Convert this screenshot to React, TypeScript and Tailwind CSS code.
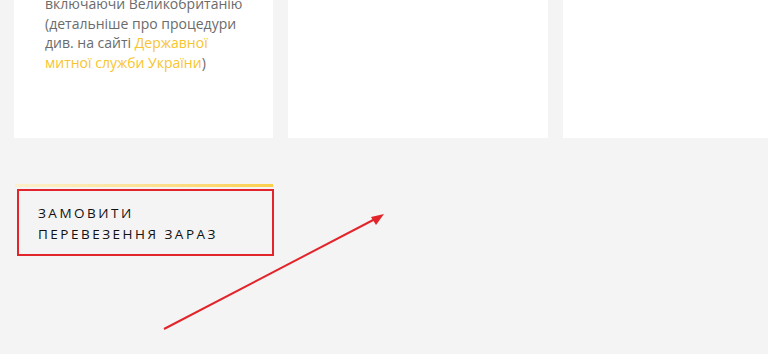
export default function App() {
  return (
    <div className="relative w-[768px] h-[354px] overflow-hidden bg-[#f4f4f4]" style={{ fontFamily: '"Open Sans", "Noto Sans", sans-serif' }}>
      <div className="flex gap-[15px] pl-[14px] h-[138px]">
        <div className="w-[259px] shrink-0 bg-white pl-[31px] pr-[20px]">
          <p className="-mt-[6px] text-[14px] leading-[19.7px] text-[#6b6b6b]">
            включаючи Великобританію (детальніше про процедури див. на сайті{" "}
            <a className="text-[#f7c52e]">Державної митної служби України</a>)
          </p>
        </div>
        <div className="w-[260px] shrink-0 bg-white" />
        <div className="w-[260px] shrink-0 bg-white" />
      </div>
      <div className="pl-[15px] pt-[46px]">
        <div className="w-[258px] h-[3px] bg-gradient-to-r from-[#fdf1cc] to-[#fccf4a]" />
        <div className="ml-[2px] mt-[2px] w-[257px] h-[67px] border-2 border-[#e2252b] pl-[19px] pt-[12px]">
          <div className="text-[13.5px] leading-[21px] tracking-[2.5px] text-[#111] uppercase">
            Замовити
            <br />
            Перевезення зараз
          </div>
        </div>
      </div>
      <svg className="absolute left-0 top-0" width="768" height="354" viewBox="0 0 768 354">
        <line x1="164" y1="329" x2="377" y2="218" stroke="#e2252b" strokeWidth="2" />
        <polygon points="384,214 371,217 376,225" fill="#e2252b" />
      </svg>
    </div>
  );
}
